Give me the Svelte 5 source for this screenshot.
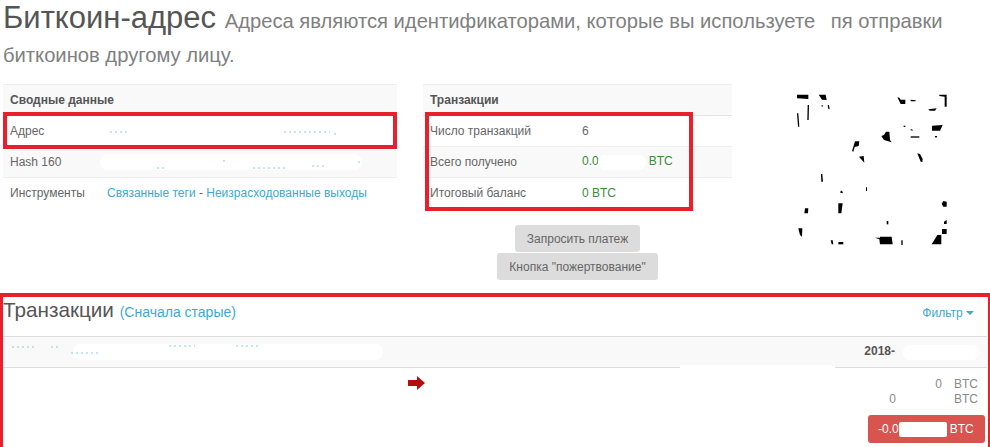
<script>
    const summary = [
        { label: "Адрес", residue: "M110 9h18M284 9h46M334 11h2", blot: false },
        { label: "Hash 160", residue: "M157 14h8M223 7h4M253 14h35M312 12h12M358 8h2", blot: true }
    ];

    const shapes = [
        "51,29 85,29 85,42 51,40", "116,29 137,29 140,45 126,44", "83,60 87,60 86,105 82,105",
        "51,85 55,85 58,125 54,125", "143,60 147,60 149,73 145,72", "125,60 128,60 128,65 125,65",
        "352,37 358,38 362,44 376,44 376,57 362,57", "392,44 407,46 407,49 392,49",
        "478,29 500,29 500,65 494,65 494,35 478,33", "445,73 470,70 465,77 449,77",
        "456,122 488,120 480,137 456,137", "312,150 318,140 328,140 330,165 335,172 312,165 304,153",
        "225,169 238,169 236,183 224,186 220,200 216,198", "392,154 418,154 418,158 392,158",
        "237,215 251,213 253,233", "412,205 420,207 428,222 427,231 422,230",
        "123,267 127,267 129,290 124,290", "182,317 186,317 189,325 181,323",
        "175,355 188,355 184,385 175,385", "75,370 85,370 84,385 73,385", "55,430 67,430 66,455 60,450",
        "258,307 261,307 261,318 258,318", "490,348 500,350 500,365 490,365 485,356",
        "320,408 325,408 325,418 320,418", "492,410 500,405 500,417 492,417",
        "486,432 500,432 500,447 486,447", "455,478 472,450 484,450 484,478",
        "285,458 300,458 300,455 335,455 338,478 300,478 298,463", "175,471 190,471 190,478 175,478",
        "152,466 158,466 160,478 155,478", "364,466 368,466 368,480 364,480",
        "371,122 376,122 376,126 371,126", "392,132 398,134 398,137 392,136", "464,153 472,153 468,160"
    ];
</script>

<main class="page">
    <h1>Биткоин-адрес <small>Адреса являются идентификаторами, которые вы используете <span class="gap"></span>пя отправки биткоинов другому лицу.</small></h1>

    <div class="columns">
        <div class="table-wrap">
            <table>
                <thead><tr><th colspan="2">Сводные данные</th></tr></thead>
                <tbody>
                    {#each summary as row}
                        <tr>
                            <td class="label-a">{row.label}</td>
                            <td class="residue-cell">
                                <svg class="residue" width="287" height="16" viewBox="100 0 287 16">
                                    {#if row.blot}<rect x="100" y="0" width="262" height="16" rx="8" />{/if}
                                    <path d={row.residue} />
                                </svg>
                            </td>
                        </tr>
                    {/each}
                    <tr>
                        <td class="label-a">Инструменты</td>
                        <td><a href="#tags">Связанные теги</a> - <a href="#unspent">Неизрасходованные выходы</a></td>
                    </tr>
                </tbody>
            </table>
            <div class="mark mark-address"></div>
        </div>

        <div class="middle">
            <div class="table-wrap">
                <table>
                    <thead><tr><th colspan="2">Транзакции</th></tr></thead>
                    <tbody>
                        <tr><td class="label-b">Число транзакций</td><td>6</td></tr>
                        <tr><td class="label-b">Всего получено</td><td class="green">0.0<span class="blot blot-amount"></span>BTC</td></tr>
                        <tr><td class="label-b">Итоговый баланс</td><td class="green">0 BTC</td></tr>
                    </tbody>
                </table>
                <div class="mark mark-stats"></div>
            </div>
            <div class="buttons">
                <button>Запросить платеж</button>
                <button>Кнопка "пожертвование"</button>
            </div>
        </div>

        <svg class="qr" width="180" height="165" viewBox="0 0 540 495">
            {#each shapes as points}
                <polygon {points} />
            {/each}
        </svg>
    </div>

    <section class="transactions">
        <div class="tx-title">
            <h2>Транзакции <a href="#order">(Сначала старые)</a></h2>
            <a class="filter" href="#filter">Фильтр <span class="caret"></span></a>
        </div>
        <div class="tx-head">
            <svg class="residue" width="375" height="18" viewBox="0 0 375 18">
                <rect x="62" y="1" width="310" height="16" rx="8" />
                <path d="M1 4h24M40 4h9M60 10h30M158 3h26M225 3h22" />
            </svg>
            <b>2018-<span class="blot blot-date"></span></b>
        </div>
        <div class="tx-body">
            <div class="wipe"></div>
            <svg class="arrow" width="18" height="14" viewBox="0 0 18 14">
                <path d="M0 4h9V0l8 7-8 7v-4H0z" />
            </svg>
            <div class="amounts">
                <div class="amount"><span class="first">0</span><span>BTC</span></div>
                <div class="amount"><span class="second">0</span><span>BTC</span></div>
                <div class="total">-0.0<span class="blot blot-total"></span>BTC</div>
            </div>
        </div>
        <div class="mark mark-section"></div>
    </section>
</main>

<style>
    :global(body) {
        margin: 0;
        background: #fff;
        overflow: hidden;
    }

    .page {
        width: 990px;
        height: 447px;
        overflow: hidden;
        font-family: "Liberation Sans", Arial, sans-serif;
        font-size: 12px;
        color: #666;
    }

    h1 {
        margin: 0;
        padding: 1px 30px 0 3px;
        font-size: 31px;
        font-weight: 400;
        line-height: 34px;
        color: #555;
    }

    h1 small {
        font-size: 20.2px;
        line-height: 1;
        color: #808080;
    }

    .gap {
        display: inline-block;
        width: 10px;
    }

    .columns {
        display: grid;
        grid-template-columns: 394px 309px 180px;
        column-gap: 26px;
        padding: 15px 0 0 3px;
        height: 224px;
        box-sizing: border-box;
    }

    .table-wrap {
        position: relative;
        align-self: stretch;
    }

    table {
        width: 100%;
        border-collapse: collapse;
    }

    th {
        height: 30px;
        padding: 0 7px;
        text-align: left;
        font-size: 12px;
        color: #555;
        background: #f9f9f9;
        border-top: 1px solid #eee;
        border-bottom: 1px solid #e4e4e4;
    }

    td {
        height: 30px;
        padding: 0 7px;
        border-bottom: 1px solid #eee;
    }

    tbody tr:nth-child(even) td {
        background: #f9f9f9;
    }

    tbody tr:last-child td {
        border-bottom: 0;
    }

    .label-a {
        width: 83px;
    }

    .label-b {
        width: 138px;
    }

    .residue-cell {
        padding: 0;
    }

    .residue {
        display: block;
    }

    .residue rect {
        fill: #fff;
    }

    .residue path {
        fill: none;
        stroke: #8ccbe8;
        stroke-width: 1;
        stroke-dasharray: 2 3;
    }

    a {
        color: #3fa7d6;
        text-decoration: none;
    }

    .green {
        color: #3c8a3c;
    }

    /* white smudges where the address and amounts were painted out */
    .blot {
        display: inline-block;
        height: 15px;
        background: #fff;
        border-radius: 7px;
        vertical-align: middle;
    }

    .blot-amount {
        width: 48px;
        margin: 0 3px 0 -1px;
    }

    .blot-date {
        width: 76px;
        margin-left: 8px;
    }

    .blot-total {
        width: 48px;
        margin-right: 3px;
        border-radius: 2px;
    }

    .mark {
        position: absolute;
        box-sizing: border-box;
        border: 4px solid #e8202c;
        pointer-events: none;
    }

    .mark-address {
        left: 0;
        top: 28px;
        width: 394px;
        height: 37px;
    }

    .mark-stats {
        left: 2px;
        top: 28px;
        width: 268px;
        height: 99px;
    }

    .middle {
        display: flex;
        flex-direction: column;
        align-items: center;
    }

    .buttons {
        display: flex;
        flex-direction: column;
        align-items: center;
        margin-top: 17px;
        gap: 1px;
    }

    button {
        height: 27px;
        padding: 0 12px;
        border: 0;
        border-radius: 3px;
        background: #dcdcdc;
        color: #666;
        font-family: inherit;
        font-size: 12px;
    }

    .qr {
        margin: 1px 0 0 22px;
    }

    .transactions {
        position: relative;
        box-sizing: border-box;
        height: 154px;
        padding: 4px 3px 0;
    }

    .tx-title {
        display: flex;
        align-items: center;
        justify-content: space-between;
        box-sizing: border-box;
        height: 39px;
        padding: 0 13px 13px 0;
    }

    h2 {
        margin: 0;
        font-size: 20.7px;
        font-weight: 400;
        color: #555;
    }

    h2 a {
        font-size: 14px;
    }

    .filter {
        padding-top: 5px;
        font-size: 12px;
    }

    .caret {
        display: inline-block;
        border: 4px solid transparent;
        border-top-color: #3fa7d6;
        border-bottom: 0;
        vertical-align: middle;
    }

    .tx-head {
        display: flex;
        align-items: center;
        justify-content: space-between;
        height: 32px;
        box-sizing: border-box;
        padding: 0 8px;
        background: #f9f9f9;
        border-top: 1px solid #ddd;
        border-bottom: 1px solid #ddd;
        color: #555;
    }

    .tx-body {
        position: relative;
        display: flex;
        justify-content: flex-end;
        padding: 9px 2px 0 0;
    }

    .wipe {
        position: absolute;
        left: 677px;
        top: -3px;
        width: 155px;
        height: 6px;
        background: #fff;
    }

    .arrow {
        position: absolute;
        left: 405px;
        top: 8px;
        fill: #b30d0d;
    }

    .amounts {
        display: flex;
        flex-direction: column;
        align-items: flex-end;
        color: #8a8a8a;
    }

    .amount {
        display: flex;
        width: 117px;
        height: 15px;
        line-height: 15px;
        justify-content: flex-end;
        padding-right: 7px;
        box-sizing: border-box;
    }

    .first {
        margin-right: 12px;
    }

    .second {
        margin-right: 58px;
    }

    .total {
        display: flex;
        align-items: center;
        width: 117px;
        height: 28px;
        margin-top: 8px;
        padding-left: 10px;
        box-sizing: border-box;
        border-radius: 3px;
        background: #d9534f;
        color: #fff;
    }

    .mark-section {
        left: 0;
        top: 0;
        width: 990px;
        height: 154px;
        border-width: 4px 2px 0 3px;
    }
</style>
